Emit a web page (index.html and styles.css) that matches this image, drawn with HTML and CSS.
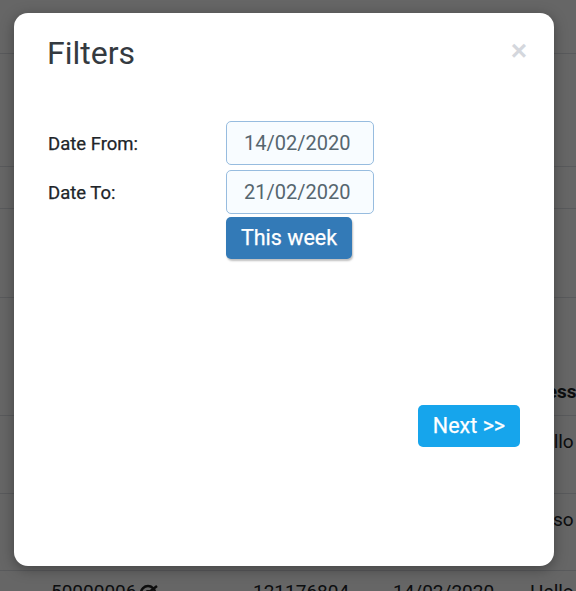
FILE: index.html
```html
<!DOCTYPE html>
<html lang="en">
<head>
    <meta charset="UTF-8">
    <meta name="viewport" content="width=device-width, initial-scale=1.0">
    <title>Filters</title>
    <link rel="stylesheet" href="styles.css">
</head>
<body>
    <div class="records">
        <div class="row row-1"></div>
        <div class="row row-2"></div>
        <div class="row row-3"></div>
        <div class="row row-4"></div>
        <div class="row row-head">
            <span></span><span></span><span></span><span>Message</span>
        </div>
        <div class="row row-5">
            <span></span><span></span><span></span><span>Hello</span>
        </div>
        <div class="row row-6">
            <span></span><span></span><span></span><span>Hi so</span>
        </div>
        <div class="row row-7">
            <span class="id-cell">50000006
                <svg class="target-icon" width="22" height="16" viewBox="0 0 22 16">
                    <circle cx="9" cy="9" r="7" fill="none" stroke="#222" stroke-width="2.5"/>
                    <circle cx="9" cy="9" r="3" fill="#222"/>
                    <path d="M9 9 L18 2" stroke="#222" stroke-width="2.5"/>
                </svg>
            </span>
            <span>121176804</span><span>14/02/2020</span><span>Hello</span>
        </div>
    </div>

    <div class="backdrop">
        <div class="modal">
            <div class="modal-head">
                <h2 class="modal-title">Filters</h2>
                <span class="close">×</span>
            </div>
            <div class="field">
                <label class="field-label">Date From:</label>
                <input class="date-input" type="text" value="14/02/2020">
            </div>
            <div class="field">
                <label class="field-label">Date To:</label>
                <input class="date-input" type="text" value="21/02/2020">
            </div>
            <div class="shortcut">
                <button class="btn btn-week">This week</button>
            </div>
            <div class="modal-foot">
                <button class="btn btn-next">Next &gt;&gt;</button>
            </div>
        </div>
    </div>
</body>
</html>
```

FILE: styles.css
```css
* { box-sizing: border-box; }
html, body { margin: 0; height: 100%; overflow: hidden; }
body { font-family: Roboto, "Liberation Sans", sans-serif; background: #fff; color: #212529; }

.records { height: 591px; overflow: hidden; }
.row { display: grid; grid-template-columns: 253px 140px 137px 120px; border-bottom: 1px solid #dee2e6; font-size: 19px; }
.row span { white-space: nowrap; }
.row-1 { height: 54px; }
.row-2 { height: 113px; }
.row-3 { height: 42px; }
.row-4 { height: 89px; }
.row-head { height: 118px; font-weight: 700; align-items: end; padding-bottom: 12px; }
.row-5 { height: 78px; padding-top: 14px; }
.row-6 { height: 77px; padding-top: 14px; }
.row-7 { height: 40px; padding-top: 9px; border-bottom: 0; }
.id-cell { padding-left: 51px; }
.target-icon { vertical-align: -2px; margin-left: -2px; }

.backdrop { position: absolute; inset: 0; background: rgba(0, 0, 0, 0.6); padding: 13px 22px 25px 14px; }
.modal { height: 553px; background: #fff; border-radius: 14px; box-shadow: 0 3px 14px rgba(0, 0, 0, 0.35); padding: 20px 34px 0; display: flex; flex-direction: column; }

.modal-head { display: flex; justify-content: space-between; align-items: flex-start; height: 88px; }
.modal-title { margin: 0 0 0 -1px; font-size: 32px; line-height: 40px; font-weight: 400; color: #343a40; }
.close { font-family: "Liberation Sans", sans-serif; font-size: 28px; line-height: 36px; font-weight: 700; color: #d4d7dd; margin-right: -7px; }

.field { display: flex; align-items: center; height: 44px; margin-bottom: 5px; }
.field-label { width: 178px; padding-top: 2px; font-size: 18.5px; font-weight: 400; -webkit-text-stroke: 0.25px #212529; color: #212529; }
.date-input { width: 148px; height: 44px; border: 1px solid #97bcdf; border-radius: 5px; background: #f8fcff; padding: 0 17px; font-family: Roboto, sans-serif; font-size: 20px; color: #56666f; }

.shortcut { padding-left: 178px; margin-top: -2px; }
.btn { border: 0; padding: 0 0 2px; border-radius: 5px; color: #fff; font-family: Roboto, sans-serif; font-size: 21.5px; font-weight: 400; -webkit-text-stroke: 0.25px #fff; height: 42px; }
.btn-week { width: 126px; background: #337ab7; box-shadow: 1px 2px 2px rgba(0, 0, 0, 0.25); }
.modal-foot { display: flex; justify-content: flex-end; margin-top: 146px; }
.btn-next { width: 102px; background: #16a5ec; }
```
